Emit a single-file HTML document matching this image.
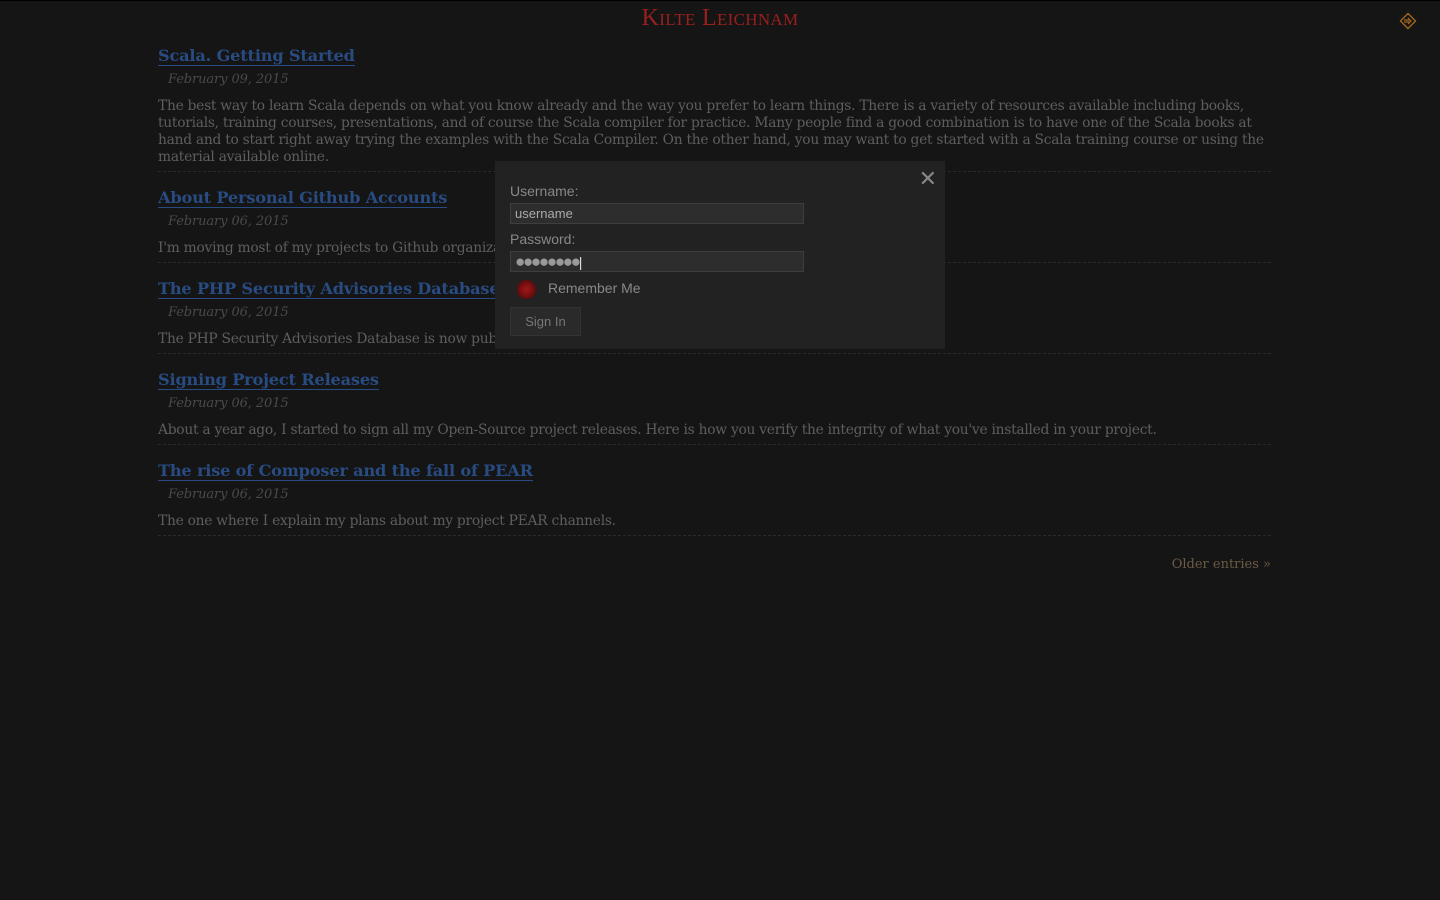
<!DOCTYPE html>
<html><head><meta charset="utf-8"><style>
html,body{margin:0;padding:0;background:#151515;width:1440px;height:900px;overflow:hidden}
body{border-top:1px solid #000;box-sizing:border-box;font-family:"DejaVu Serif","Liberation Serif",serif;color:#5e5e5e}
.hdr{position:absolute;top:5px;left:0;width:1440px;text-align:center;font-family:"Liberation Serif",serif;font-size:24px;color:#9a1f1f;font-variant:small-caps;letter-spacing:0.3px}
.icon{position:absolute;left:1399px;top:12px}
.main{position:absolute;left:158px;top:44px;width:1113px}
.post{border-bottom:1px dashed #2a2a2a;padding-bottom:5px;margin-bottom:14px}
.post h2{margin:0;font-size:16.2px;font-weight:bold;line-height:24px;letter-spacing:-0.2px}
.post h2 a{color:#284b82;text-decoration:none;border-bottom:1px solid #284b82}
.date{font-style:italic;font-size:13px;color:#4a4a4a;margin:3px 0 0 10px;line-height:18px;letter-spacing:-0.1px}
.post p{margin:9px 0 0;font-size:13.8px;line-height:17px;letter-spacing:-0.26px}
.older{position:absolute;right:169px;top:557px;font-size:13px;color:#6b5a45}
.modal{position:absolute;left:495px;top:161px;width:450px;height:188px;background:#222;font-family:"Liberation Sans",sans-serif;color:#888}
.modal .x{position:absolute;right:8px;top:5px;font-size:22px;color:#888}
.lbl{position:absolute;left:15px;font-size:14px}
.inp{position:absolute;left:15px;width:288px;height:19px;background:#2d2d2d;border:1px solid #3e3e3e;font-size:13px;color:#aaa;padding-left:4px;line-height:19px;overflow:hidden}
.dot{position:absolute;left:22px;top:119px;width:19px;height:19px;border-radius:50%;background:radial-gradient(circle,#a01818 0,#6a0d0d 60%,#2a0a0a 100%)}
.btn{position:absolute;left:15px;top:146px;width:69px;height:27px;background:#2a2a2a;border:1px solid #333;font-size:13px;color:#777;text-align:center;line-height:27px}
</style></head><body>
<div class="hdr">Kilte Leichnam</div>
<svg class="icon" width="18" height="18" viewBox="0 0 18 18"><path d="M9 1.5L16.5 9 9 16.5 1.5 9Z" fill="none" stroke="#a0661e" stroke-width="1.4"/><path d="M5 8h5.5M5 10h5.5M9 6l3 3-3 3" fill="none" stroke="#a0661e" stroke-width="1.2"/></svg>
<div class="main">
<div class="post"><h2><a>Scala. Getting Started</a></h2><div class="date">February 09, 2015</div><p>The best way to learn Scala depends on what you know already and the way you prefer to learn things. There is a variety of resources available including books, tutorials, training courses, presentations, and of course the Scala compiler for practice. Many people find a good combination is to have one of the Scala books at hand and to start right away trying the examples with the Scala Compiler. On the other hand, you may want to get started with a Scala training course or using the material available online.</p></div>
<div class="post"><h2><a>About Personal Github Accounts</a></h2><div class="date">February 06, 2015</div><p>I'm moving most of my projects to Github organizations.</p></div>
<div class="post"><h2><a>The PHP Security Advisories Database</a></h2><div class="date">February 06, 2015</div><p>The PHP Security Advisories Database is now public.</p></div>
<div class="post"><h2><a>Signing Project Releases</a></h2><div class="date">February 06, 2015</div><p>About a year ago, I started to sign all my Open-Source project releases. Here is how you verify the integrity of what you've installed in your project.</p></div>
<div class="post"><h2><a>The rise of Composer and the fall of PEAR</a></h2><div class="date">February 06, 2015</div><p>The one where I explain my plans about my project PEAR channels.</p></div>
</div>
<div class="older">Older entries »</div>
<div class="modal">
<div class="x">✕</div>
<div class="lbl" style="top:22px">Username:</div>
<div class="inp" style="top:42px">username</div>
<div class="lbl" style="top:70px">Password:</div>
<div class="inp" style="top:90px;color:#9a9a9a;font-size:17px;letter-spacing:-2.3px">●●●●●●●●<span style="color:#ddd;font-size:14px;letter-spacing:0">|</span></div>
<div class="dot"></div>
<div class="lbl" style="left:53px;top:119px">Remember Me</div>
<div class="btn">Sign In</div>
</div>
</body></html>
